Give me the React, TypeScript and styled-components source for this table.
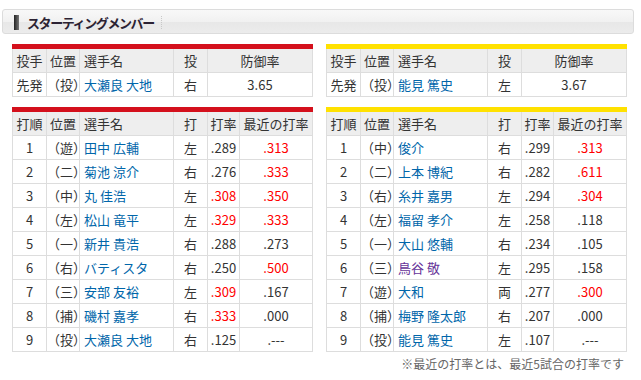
import React from "react";
import styled, { createGlobalStyle } from "styled-components";

const Global = createGlobalStyle`
  html, body { margin: 0; padding: 0; background: #fff; }
  body { font-family: "Noto Sans CJK JP", "Liberation Sans", sans-serif; color: #333; }
`;

const Page = styled.div`
  width: 641px;
  padding-top: 9px;
`;

const TitleBar = styled.div`
  box-sizing: border-box;
  margin-left: 2px;
  width: 632px;
  height: 25px;
  border: 1px solid #dcdcdc;
  border-radius: 3px;
  background: linear-gradient(#f8f8f8 0%, #f1f1f1 50%, #e7e7e7 52%, #ececec 100%);
  display: flex;
  align-items: center;
  padding-left: 11px;
`;

const TitleMark = styled.span`
  width: 5px;
  height: 15px;
  background: linear-gradient(to right, #222, #555 60%, #777);
  margin-top: 2px;
`;

const TitleText = styled.h2`
  margin: 0 0 0 8px;
  font-size: 13px;
  font-weight: bold;
  letter-spacing: -1.4px;
  color: #2b2233;
  line-height: 1;
  margin-top: 1px;
`;

const TitleSep = styled.span`
  margin-left: 7px;
  margin-top: 2px;
  width: 0;
  height: 13px;
  border-left: 1px dotted #c8c8c8;
`;

const Body = styled.div`
  margin-left: 12px;
  width: 614px;
`;

const Pair = styled.div<{ $top: number }>`
  display: grid;
  grid-template-columns: 300px 300px;
  column-gap: 14px;
  margin-top: ${(p) => p.$top}px;
`;

const Table = styled.table<{ $accent: string }>`
  width: 300px;
  table-layout: fixed;
  border-collapse: collapse;
  border-top: 5px solid ${(p) => p.$accent};
  font-size: 13px;
`;

const Th = styled.th<{ $left?: boolean }>`
  height: 23px;
  padding: 0 ${(p) => (p.$left ? "0 0 4px" : "0")};
  padding-left: ${(p) => (p.$left ? "4px" : "0")};
  border: 1px solid #dddddd;
  border-top: none;
  background: #eeeeee;
  font-weight: normal;
  color: #333;
  text-align: ${(p) => (p.$left ? "left" : "center")};
  white-space: nowrap;
  line-height: 23px;
`;

const Td = styled.td<{ $left?: boolean; $tone?: "red" | "link" | "visited" }>`
  height: 23px;
  padding: 0;
  padding-left: ${(p) => (p.$left ? "4px" : "0")};
  border: 1px solid #dddddd;
  background: #fff;
  text-align: ${(p) => (p.$left ? "left" : "center")};
  white-space: nowrap;
  overflow: visible;
  line-height: 23px;
  color: ${(p) =>
    p.$tone === "red" ? "#ff0000" : p.$tone === "link" ? "#0066aa" : p.$tone === "visited" ? "#663399" : "#333"};
`;

const Note = styled.p`
  margin: 3px 2px 0 0;
  font-size: 12px;
  color: #666;
  text-align: right;
  line-height: 18px;
`;

type Pitcher = { role: string; pos: string; name: string; hand: string; era: string };
type Batter = {
  no: number;
  pos: string;
  name: string;
  hand: string;
  avg: string;
  avgRed?: boolean;
  recent: string;
  recentRed?: boolean;
  visited?: boolean;
};

const carpP: Pitcher = { role: "先発", pos: "（投）", name: "大瀬良 大地", hand: "右", era: "3.65" };
const tigersP: Pitcher = { role: "先発", pos: "（投）", name: "能見 篤史", hand: "左", era: "3.67" };

const carp: Batter[] = [
  { no: 1, pos: "（遊）", name: "田中 広輔", hand: "左", avg: ".289", recent: ".313", recentRed: true },
  { no: 2, pos: "（二）", name: "菊池 涼介", hand: "右", avg: ".276", recent: ".333", recentRed: true },
  { no: 3, pos: "（中）", name: "丸 佳浩", hand: "左", avg: ".308", avgRed: true, recent: ".350", recentRed: true },
  { no: 4, pos: "（左）", name: "松山 竜平", hand: "左", avg: ".329", avgRed: true, recent: ".333", recentRed: true },
  { no: 5, pos: "（一）", name: "新井 貴浩", hand: "右", avg: ".288", recent: ".273" },
  { no: 6, pos: "（右）", name: "バティスタ", hand: "右", avg: ".250", recent: ".500", recentRed: true },
  { no: 7, pos: "（三）", name: "安部 友裕", hand: "左", avg: ".309", avgRed: true, recent: ".167" },
  { no: 8, pos: "（捕）", name: "磯村 嘉孝", hand: "右", avg: ".333", avgRed: true, recent: ".000" },
  { no: 9, pos: "（投）", name: "大瀬良 大地", hand: "右", avg: ".125", recent: ".---" },
];

const tigers: Batter[] = [
  { no: 1, pos: "（中）", name: "俊介", hand: "右", avg: ".299", recent: ".313", recentRed: true },
  { no: 2, pos: "（二）", name: "上本 博紀", hand: "右", avg: ".282", recent: ".611", recentRed: true },
  { no: 3, pos: "（右）", name: "糸井 嘉男", hand: "左", avg: ".294", recent: ".304", recentRed: true },
  { no: 4, pos: "（左）", name: "福留 孝介", hand: "左", avg: ".258", recent: ".118" },
  { no: 5, pos: "（一）", name: "大山 悠輔", hand: "右", avg: ".234", recent: ".105" },
  { no: 6, pos: "（三）", name: "鳥谷 敬", hand: "左", avg: ".295", recent: ".158", visited: true },
  { no: 7, pos: "（遊）", name: "大和", hand: "両", avg: ".277", recent: ".300", recentRed: true },
  { no: 8, pos: "（捕）", name: "梅野 隆太郎", hand: "右", avg: ".207", recent: ".000" },
  { no: 9, pos: "（投）", name: "能見 篤史", hand: "左", avg: ".107", recent: ".---" },
];

const PitcherTable = ({ accent, p }: { accent: string; p: Pitcher }) => (
  <Table $accent={accent}>
    <colgroup>
      <col style={{ width: 34 }} />
      <col style={{ width: 33 }} />
      <col style={{ width: 94 }} />
      <col style={{ width: 34 }} />
      <col style={{ width: 105 }} />
    </colgroup>
    <thead>
      <tr>
        <Th>投手</Th>
        <Th>位置</Th>
        <Th $left>選手名</Th>
        <Th>投</Th>
        <Th>防御率</Th>
      </tr>
    </thead>
    <tbody>
      <tr>
        <Td>{p.role}</Td>
        <Td>{p.pos}</Td>
        <Td $left $tone="link">{p.name}</Td>
        <Td>{p.hand}</Td>
        <Td>{p.era}</Td>
      </tr>
    </tbody>
  </Table>
);

const BatterTable = ({ accent, rows }: { accent: string; rows: Batter[] }) => (
  <Table $accent={accent}>
    <colgroup>
      <col style={{ width: 34 }} />
      <col style={{ width: 33 }} />
      <col style={{ width: 94 }} />
      <col style={{ width: 34 }} />
      <col style={{ width: 32 }} />
      <col style={{ width: 73 }} />
    </colgroup>
    <thead>
      <tr>
        <Th>打順</Th>
        <Th>位置</Th>
        <Th $left>選手名</Th>
        <Th>打</Th>
        <Th>打率</Th>
        <Th>最近の打率</Th>
      </tr>
    </thead>
    <tbody>
      {rows.map((r) => (
        <tr key={r.no}>
          <Td>{r.no}</Td>
          <Td>{r.pos}</Td>
          <Td $left $tone={r.visited ? "visited" : "link"}>{r.name}</Td>
          <Td>{r.hand}</Td>
          <Td $tone={r.avgRed ? "red" : undefined}>{r.avg}</Td>
          <Td $tone={r.recentRed ? "red" : undefined}>{r.recent}</Td>
        </tr>
      ))}
    </tbody>
  </Table>
);

export default function App() {
  return (
    <Page>
      <Global />
      <TitleBar>
        <TitleMark />
        <TitleText>スターティングメンバー</TitleText>
        <TitleSep />
      </TitleBar>
      <Body>
        <Pair $top={10}>
          <PitcherTable accent="#d4101c" p={carpP} />
          <PitcherTable accent="#ffe100" p={tigersP} />
        </Pair>
        <Pair $top={10}>
          <BatterTable accent="#d4101c" rows={carp} />
          <BatterTable accent="#ffe100" rows={tigers} />
        </Pair>
        <Note>※最近の打率とは、最近5試合の打率です</Note>
      </Body>
    </Page>
  );
}
